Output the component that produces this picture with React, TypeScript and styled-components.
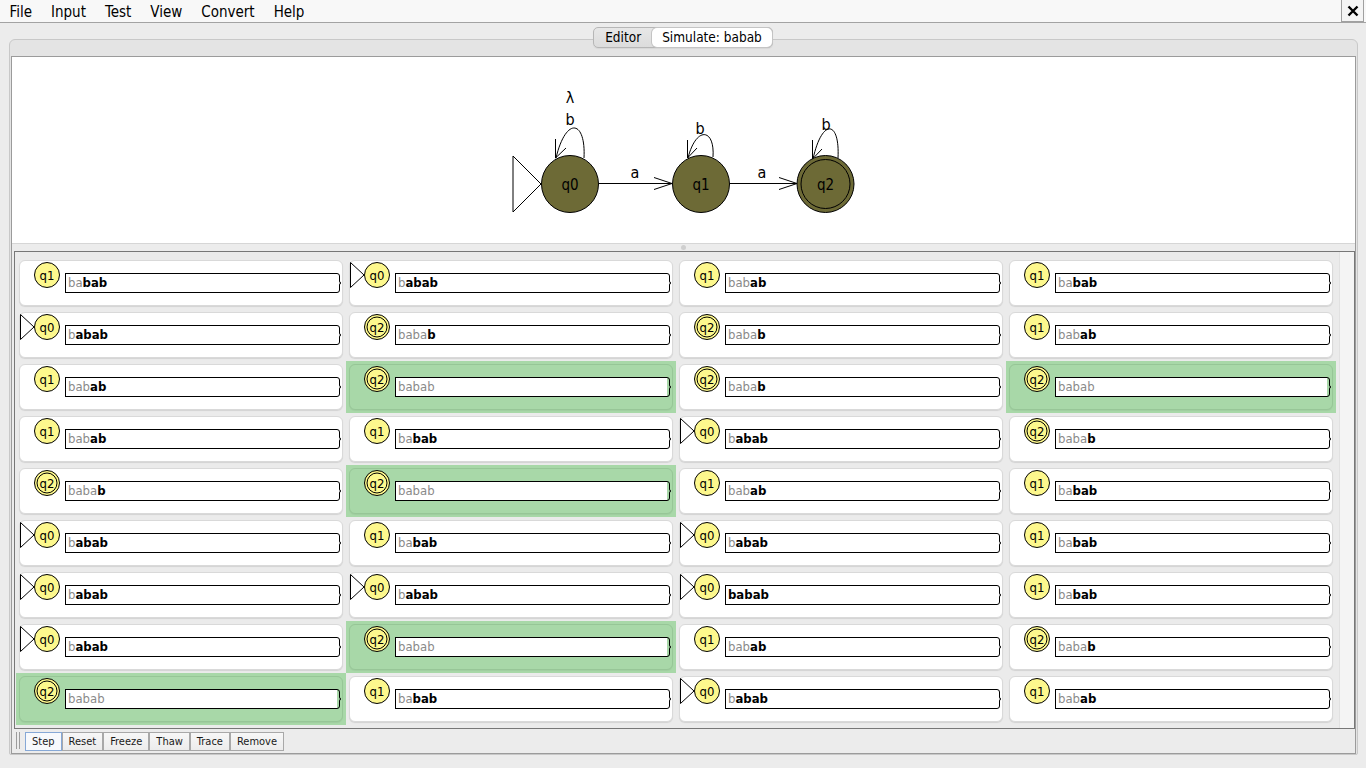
import React from 'react';
import styled, { createGlobalStyle } from 'styled-components';

const FONT = `"DejaVu Sans Condensed", "DejaVu Sans", "Liberation Sans", sans-serif`;

const GlobalStyle = createGlobalStyle`
  html, body {
    margin: 0;
    padding: 0;
    background: #ececec;
  }
  body {
    font-family: ${FONT};
    color: #000;
  }
  * {
    box-sizing: border-box;
  }
`;

type Cell = { state: 0 | 1 | 2; read: number; ok?: boolean };

const INPUT = 'babab';

// 9 rows x 4 columns of configurations
const cells: Cell[] = [
  { state: 1, read: 2 }, { state: 0, read: 1 }, { state: 1, read: 3 }, { state: 1, read: 2 },
  { state: 0, read: 1 }, { state: 2, read: 4 }, { state: 2, read: 4 }, { state: 1, read: 3 },
  { state: 1, read: 3 }, { state: 2, read: 5, ok: true }, { state: 2, read: 4 }, { state: 2, read: 5, ok: true },
  { state: 1, read: 3 }, { state: 1, read: 2 }, { state: 0, read: 1 }, { state: 2, read: 4 },
  { state: 2, read: 4 }, { state: 2, read: 5, ok: true }, { state: 1, read: 3 }, { state: 1, read: 2 },
  { state: 0, read: 1 }, { state: 1, read: 2 }, { state: 0, read: 1 }, { state: 1, read: 2 },
  { state: 0, read: 1 }, { state: 0, read: 1 }, { state: 0, read: 0 }, { state: 1, read: 2 },
  { state: 0, read: 1 }, { state: 2, read: 5, ok: true }, { state: 1, read: 3 }, { state: 2, read: 4 },
  { state: 2, read: 5, ok: true }, { state: 1, read: 2 }, { state: 0, read: 1 }, { state: 1, read: 3 },
];

const Page = styled.div`
  width: 1366px;
  height: 768px;
  display: flex;
  flex-direction: column;
  overflow: hidden;
`;

const MenuBar = styled.div`
  display: flex;
  align-items: flex-start;
  height: 23px;
  background: #f8f8f8;
  border-bottom: 1px solid #a3a3a3;
  font-size: 15px;
`;

const MenuItem = styled.span`
  padding: 2px 9.5px 0;
  line-height: 20px;
`;

const CloseBox = styled.div`
  margin-left: auto;
  margin-right: 2px;
  width: 23px;
  height: 22px;
  border: 1px solid #a0a0a0;
  border-top: none;
  background: #f4f4f4;
  display: flex;
  align-items: center;
  justify-content: center;
`;

const TabsRow = styled.div`
  display: flex;
  justify-content: center;
  margin-top: 4px;
  margin-bottom: -9px;
  position: relative;
  z-index: 1;
`;

const Segmented = styled.div`
  display: flex;
  height: 21px;
  border: 1px solid #b6b6b6;
  border-radius: 5px;
  background: linear-gradient(#e7e7e7, #dcdcdc);
  box-shadow: 0 1px 1px rgba(0, 0, 0, 0.06);
`;

const Segment = styled.div<{ $active?: boolean }>`
  padding: 0 ${(p) => (p.$active ? 10 : 11)}px;
  font-size: 13.5px;
  line-height: 19px;
  border-radius: 5px;
  background: ${(p) => (p.$active ? '#ffffff' : 'transparent')};
  box-shadow: ${(p) => (p.$active ? '0 0 0 1px #c4c4c4' : 'none')};
`;

const Panel = styled.div`
  margin: 0 8px 0 9px;
  height: 716px;
  border: 1px solid #c8c8c8;
  border-radius: 6px 6px 2px 2px;
  background: #e4e4e4;
  padding: 16px 1px 0 1px;
  display: flex;
  flex-direction: column;
`;

const ContentBox = styled.div`
  flex: 1;
  border: 1px solid #9b9b9b;
  background: #ececec;
  display: flex;
  flex-direction: column;
`;

const DiagramPane = styled.div`
  height: 187px;
  background: #ffffff;
  border-bottom: 1px solid #d6d6d6;
`;

const Divider = styled.div`
  height: 7px;
  display: flex;
  align-items: center;
  justify-content: center;
`;

const Dot = styled.div`
  width: 5px;
  height: 5px;
  border-radius: 50%;
  background: #cfcfcf;
`;

const GridPanel = styled.div`
  height: 478px;
  margin-left: 2px;
  border: 1px solid #777777;
  background: #ebebeb;
  display: flex;
`;

const Grid = styled.div`
  display: grid;
  grid-template-columns: repeat(4, 330px);
  grid-auto-rows: 52px;
  align-content: start;
  padding: 5px 0 0 1px;
`;

const ScrollTrack = styled.div`
  margin-left: auto;
  width: 15px;
  background: #f4f4f4;
  border-left: 1px solid #e1e1e1;
`;

const Slot = styled.div<{ $ok?: boolean }>`
  padding: 3px;
  background: ${(p) => (p.$ok ? '#a8d8a8' : 'transparent')};
`;

const Card = styled.div<{ $ok?: boolean }>`
  height: 46px;
  display: flex;
  align-items: flex-start;
  border: 1px solid ${(p) => (p.$ok ? '#97c697' : '#d9d9d9')};
  border-radius: 6px;
  background: ${(p) => (p.$ok ? '#a8d8a8' : '#ffffff')};
  box-shadow: 0 1px 1px rgba(0, 0, 0, ${(p) => (p.$ok ? 0.05 : 0.1)});
`;

const Marker = styled.svg`
  flex: none;
  display: block;
`;

const FieldBox = styled.div`
  flex: 1;
  display: flex;
  height: 20px;
  margin: 12px 1px 0 0;
`;

const FieldText = styled.div`
  flex: 1;
  background: #ffffff;
  border: 1px solid #000;
  border-right: none;
  padding-left: 2px;
  font-size: 13px;
  line-height: 18px;
  white-space: nowrap;
`;

const Brace = styled.svg`
  flex: none;
  display: block;
`;

const Read = styled.span`
  color: #8a8a8a;
`;

const Rest = styled.span`
  color: #000;
  font-weight: bold;
`;

const Toolbar = styled.div`
  flex: 1;
  display: flex;
  align-items: flex-start;
  padding: 3px 0 0 4px;
`;

const Grip = styled.div`
  width: 4px;
  height: 17px;
  margin: 0 5px 0 0;
  border-left: 1px solid #9c9c9c;
  border-right: 1px solid #9c9c9c;
`;

const ToolButton = styled.div<{ $focus?: boolean }>`
  height: 19px;
  padding: 0 6px;
  font-size: 11px;
  line-height: 17px;
  color: #1a1a1a;
  border: 1px solid ${(p) => (p.$focus ? '#86a8d6' : '#a8a8a8')};
  background: ${(p) => (p.$focus ? '#f7f9fc' : 'linear-gradient(#f7f7f7, #ececec)')};
`;

function StateMarker({ state }: { state: 0 | 1 | 2 }) {
  return (
    <Marker width="45" height="30" viewBox="0 0 45 30">
      {state === 0 && (
        <polygon points="0.5,1.5 0.5,26.5 14,14" fill="#fff" stroke="#000" strokeWidth="1" />
      )}
      <circle cx="27" cy="14" r="12.5" fill="#fdf88d" stroke="#000" strokeWidth="1" />
      {state === 2 && <circle cx="27" cy="14" r="10" fill="none" stroke="#000" strokeWidth="1" />}
      <text
        x="27"
        y="14.5"
        textAnchor="middle"
        dominantBaseline="central"
        fontFamily={FONT}
        fontSize="13"
        fill="#000"
      >
        q{state}
      </text>
    </Marker>
  );
}

function ConfigCell({ cell }: { cell: Cell }) {
  return (
    <Slot $ok={cell.ok}>
      <Card $ok={cell.ok}>
        <StateMarker state={cell.state} />
        <FieldBox>
          <FieldText>
            <Read>{INPUT.slice(0, cell.read)}</Read>
            <Rest>{INPUT.slice(cell.read)}</Rest>
          </FieldText>
          <Brace width="4" height="20" viewBox="0 0 4 20">
            <path
              d="M0 0.5 Q2.5 0.5 2.5 3 L2.5 8 Q2.5 10 4 10 Q2.5 10 2.5 12 L2.5 17 Q2.5 19.5 0 19.5"
              fill="none"
              stroke="#000"
              strokeWidth="1"
            />
          </Brace>
        </FieldBox>
      </Card>
    </Slot>
  );
}

function Automaton() {
  const olive = '#6d6a36';
  const label = { fontFamily: FONT, fontSize: 16, textAnchor: 'middle' as const, dominantBaseline: 'central' as const };
  return (
    <svg width="1343" height="186" viewBox="12 57 1343 186">
      {/* initial marker */}
      <polygon points="513,156 513,212 541,184" fill="#fff" stroke="#000" strokeWidth="1" />

      {/* transitions */}
      <line x1="599" y1="183.5" x2="672" y2="183.5" stroke="#000" />
      <polyline points="654,177.5 672,183.5 654,189.5" fill="none" stroke="#000" />
      <text x="635" y="172" {...label}>a</text>

      <line x1="730" y1="183.5" x2="797" y2="183.5" stroke="#000" />
      <polyline points="779,177.5 797,183.5 779,189.5" fill="none" stroke="#000" />
      <text x="762" y="172" {...label}>a</text>

      {/* self loops */}
      <path d="M584 158 C586 120, 566 116, 556 158" fill="none" stroke="#000" />
      <polyline points="555.5,139 555.5,158 566,148" fill="none" stroke="#000" />
      <text x="570" y="119" {...label}>b</text>
      <text x="570" y="97" {...label}>λ</text>

      <path d="M713 157 C715 128, 696 126, 688 158" fill="none" stroke="#000" />
      <polyline points="687.5,140 687.5,158 697,148" fill="none" stroke="#000" />
      <text x="700" y="128" {...label}>b</text>

      <path d="M838 158 C840 120, 822 118, 813 159" fill="none" stroke="#000" />
      <polyline points="812.5,140 812.5,159 822,149" fill="none" stroke="#000" />
      <text x="826" y="124" {...label}>b</text>

      {/* states */}
      <circle cx="570" cy="184" r="28.5" fill={olive} stroke="#000" />
      <text x="570" y="185" {...label} fontSize="15">q0</text>

      <circle cx="701" cy="184" r="28.5" fill={olive} stroke="#000" />
      <text x="701" y="185" {...label} fontSize="15">q1</text>

      <circle cx="825.5" cy="184" r="28.5" fill={olive} stroke="#000" />
      <circle cx="825.5" cy="184" r="24.5" fill="none" stroke="#000" />
      <text x="825.5" y="185" {...label} fontSize="15">q2</text>
    </svg>
  );
}

export default function App() {
  return (
    <>
      <GlobalStyle />
      <Page>
        <MenuBar>
          {['File', 'Input', 'Test', 'View', 'Convert', 'Help'].map((m) => (
            <MenuItem key={m}>{m}</MenuItem>
          ))}
          <CloseBox>
            <svg width="12" height="12" viewBox="0 0 12 12">
              <path d="M1.5 1.5 L10.5 10.5 M10.5 1.5 L1.5 10.5" stroke="#000" strokeWidth="2.4" />
            </svg>
          </CloseBox>
        </MenuBar>

        <TabsRow>
          <Segmented>
            <Segment>Editor</Segment>
            <Segment $active>Simulate: babab</Segment>
          </Segmented>
        </TabsRow>

        <Panel>
          <ContentBox>
            <DiagramPane>
              <Automaton />
            </DiagramPane>
            <Divider>
              <Dot />
            </Divider>
            <GridPanel>
              <Grid>
                {cells.map((c, i) => (
                  <ConfigCell key={i} cell={c} />
                ))}
              </Grid>
              <ScrollTrack />
            </GridPanel>
            <Toolbar>
              <Grip />
              {['Step', 'Reset', 'Freeze', 'Thaw', 'Trace', 'Remove'].map((b, i) => (
                <ToolButton key={b} $focus={i === 0}>
                  {b}
                </ToolButton>
              ))}
            </Toolbar>
          </ContentBox>
        </Panel>
      </Page>
    </>
  );
}
